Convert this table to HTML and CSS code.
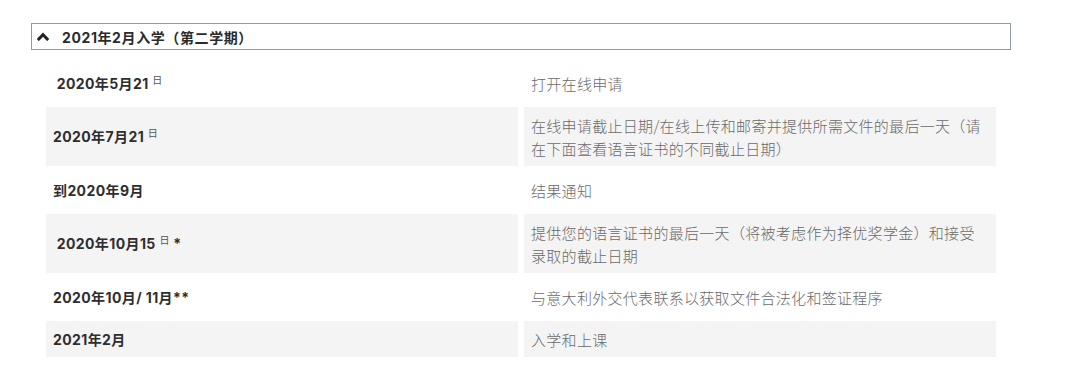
FILE: index.html
```html
<!DOCTYPE html>
<html lang="zh">
<head>
<meta charset="utf-8">
<link rel="stylesheet" href="styles.css">
</head>
<body>
<div class="wrap">
  <div class="acc-head">
    <svg class="chev" width="12" height="9" viewBox="0 0 12 9"><polyline points="1.8,7 6,2.6 10.2,7" fill="none" stroke="#222" stroke-width="3" stroke-linecap="square"/></svg>
    <span>2021年2月入学（第二学期）</span>
  </div>
  <table class="dates">
    <tr>
      <td class="when">&nbsp;2020年5月21 <sup>日</sup></td>
      <td class="what">打开在线申请</td>
    </tr>
    <tr class="alt">
      <td class="when">2020年7月21 <sup>日</sup></td>
      <td class="what">在线申请截止日期/在线上传和邮寄并提供所需文件的最后一天（请在下面查看语言证书的不同截止日期）</td>
    </tr>
    <tr>
      <td class="when">到2020年9月</td>
      <td class="what">结果通知</td>
    </tr>
    <tr class="alt">
      <td class="when">&nbsp;2020年10月15 <sup>日</sup> *</td>
      <td class="what">提供您的语言证书的最后一天（将被考虑作为择优奖学金）和接受录取的截止日期</td>
    </tr>
    <tr>
      <td class="when">2020年10月/ 11月**</td>
      <td class="what">与意大利外交代表联系以获取文件合法化和签证程序</td>
    </tr>
    <tr class="alt">
      <td class="when">2021年2月</td>
      <td class="what">入学和上课</td>
    </tr>
  </table>
</div>
</body>
</html>
```
FILE: styles.css
```css
html, body {
  margin: 0;
  padding: 0;
  background: #fff;
}
body {
  font-family: "Inter", "Noto Sans CJK SC", sans-serif;
  color: #333;
}
.wrap {
  padding: 23px 0 0 31px;
  width: 980px;
}
.acc-head {
  height: 25px;
  border: 1px solid #8d9ba7;
  display: flex;
  align-items: center;
  gap: 13px;
  padding-left: 5px;
  font-size: 14px;
  font-weight: 700;
  letter-spacing: 0.6px;
  color: #2b2b2b;
}
.chev {
  display: block;
  margin-top: -1px;
}
.dates {
  margin: 9px 0 0 9px;
  width: 962px;
  border-collapse: separate;
  border-spacing: 6px;
  table-layout: fixed;
}
.dates td {
  width: 50%;
  padding: 6.5px 7px;
  line-height: 23px;
  vertical-align: middle;
}
.dates tr.alt td {
  background: #f4f4f4;
}
.when {
  font-family: "Inter", "Noto Sans CJK SC", sans-serif;
  font-weight: 700;
  font-size: 14px;
  letter-spacing: 0.4px;
  color: #2e2e2e;
}
.when sup {
  font-weight: 400;
  font-size: 10px;
  color: #555;
  vertical-align: 5px;
  line-height: 0;
  letter-spacing: 0;
}
.what {
  font-family: "Noto Sans CJK SC", sans-serif;
  font-weight: 300;
  font-size: 15px;
  letter-spacing: 0.3px;
  color: #6a6a6a;
}
```
